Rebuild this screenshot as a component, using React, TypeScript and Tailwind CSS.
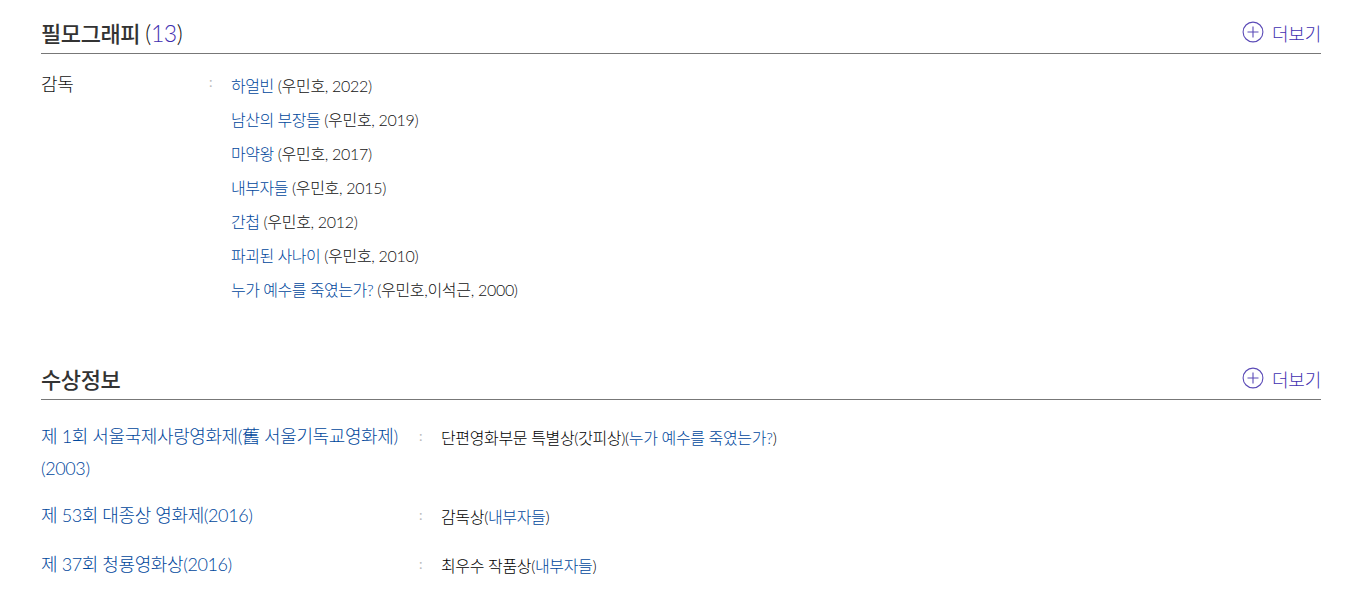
const films = [
  { title: '하얼빈', meta: '(우민호, 2022)' },
  { title: '남산의 부장들', meta: '(우민호, 2019)' },
  { title: '마약왕', meta: '(우민호, 2017)' },
  { title: '내부자들', meta: '(우민호, 2015)' },
  { title: '간첩', meta: '(우민호, 2012)' },
  { title: '파괴된 사나이', meta: '(우민호, 2010)' },
  { title: '누가 예수를 죽였는가?', meta: '(우민호,이석근, 2000)' },
];

const awards = [
  { name: '제 1회 서울국제사랑영화제(舊 서울기독교영화제)(2003)', prize: '단편영화부문 특별상(갓피상)', film: '누가 예수를 죽였는가?', row: 'pb-[15px]' },
  { name: '제 53회 대종상 영화제(2016)', prize: '감독상', film: '내부자들', row: 'pb-[15px]' },
  { name: '제 37회 청룡영화상(2016)', prize: '최우수 작품상', film: '내부자들', row: '' },
];

function SectionHead({ children }: { children: React.ReactNode }) {
  return (
    <div className="flex h-[38px] items-center justify-between border-b border-[#777777]">
      <h2 className="mb-[2px] text-[22px] font-medium tracking-[-0.4px] text-[#333333]">{children}</h2>
      <a className="flex items-center gap-[8px] text-[18px] font-light tracking-[-0.2px] text-[#3f2fb0]">
        <svg className="mb-[6px]" width="22" height="22" viewBox="0 0 22 22" fill="none" stroke="#5b4bb7" strokeWidth="1.1">
          <circle cx="11" cy="11" r="9.9" />
          <path d="M11 5.5v11M5.5 11h11" />
        </svg>
        더보기
      </a>
    </div>
  );
}

export default function App() {
  return (
    <div className="h-[610px] overflow-hidden bg-white pl-[41px] pr-[26px] pt-[16px] font-['Lato','Noto_Sans_CJK_KR',sans-serif] text-[#333333]">
      <section>
        <SectionHead>
          필모그래피 <span className="text-[23px] font-light text-[#111111]">(<span className="text-[#3f2fb0]">13</span>)</span>
        </SectionHead>
        <div className="flex pt-[14px]">
          <div className="w-[168px] text-[18px] font-light leading-[32px] tracking-[-0.3px] text-[#111111]">감독</div>
          <div className="w-[22px] text-[14px] leading-[28px] text-[#bbbbbb]">:</div>
          <ul className="pt-[1px] text-[16px] font-light leading-[34px] tracking-[-0.3px] text-[#111111]">
            {films.map((film) => (
              <li key={film.title}>
                <a className="tracking-[-0.5px] text-[#00479c]">{film.title}</a> {film.meta}
              </li>
            ))}
          </ul>
        </div>
      </section>

      <section className="mt-[55px]">
        <SectionHead>수상정보</SectionHead>
        <div className="pt-[20px]">
          {awards.map((award) => (
            <div key={award.name} className={`flex ${award.row}`}>
              <div className="w-[378px] pr-[10px] text-[18px] font-light leading-[32px] tracking-[-0.4px] text-[#00479c]">{award.name}</div>
              <div className="w-[22px] text-[14px] leading-[32px] text-[#bbbbbb]">:</div>
              <div className="pt-[2px] text-[16px] font-light leading-[32px] tracking-[-0.35px] text-[#000000]">
                {award.prize}(<a className="text-[#00479c]">{award.film}</a>)
              </div>
            </div>
          ))}
        </div>
      </section>
    </div>
  );
}
